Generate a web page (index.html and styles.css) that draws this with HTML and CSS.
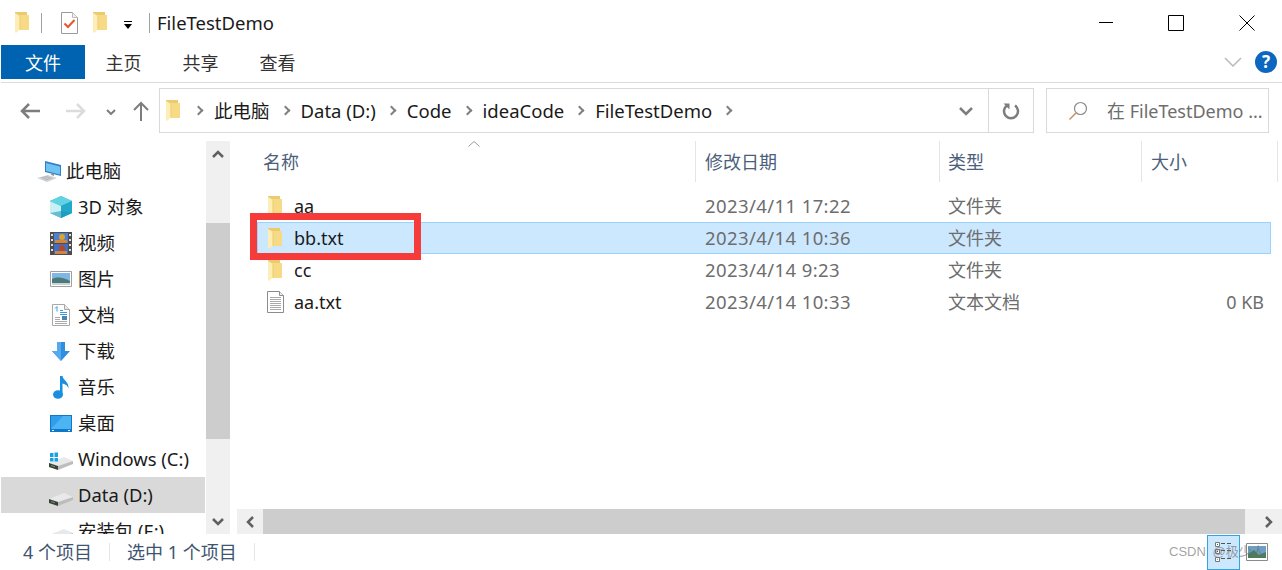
FILE: index.html
```html
<!DOCTYPE html>
<html lang="zh-CN">
<head>
    <meta charset="UTF-8">
    <title>FileTestDemo</title>
    <link rel="stylesheet" href="styles.css">
</head>
<body>
    <svg class="defs" width="0" height="0">
        <symbol id="folder" viewBox="0 0 14 21">
            <path d="M0 0h12v3h2v15H0z" fill="#eccb6e"/>
            <path d="M5 3h9v15H5z" fill="#f7da85"/>
            <path d="M0 1l5 3v13.500L1 21l-1-1z" fill="#fdeeb6"/>
            <path d="M5 4v13.500" stroke="#eccb6e"/>
        </symbol>
        <symbol id="drive" viewBox="0 0 24 22">
            <path d="M0 15L15 9l9 4v1L9 20z" fill="#e9e9e9"/>
            <path d="M9 18l15-5v3L9 22z" fill="#bdbdbd"/>
            <path d="M0 15l9 3v4l-9-3z" fill="#3e3e3e"/>
            <path d="M2 17l4 1.300v1L2 18z" fill="#4caf50"/>
        </symbol>
    </svg>

    <header class="titlebar">
        <svg width="14" height="21"><use href="#folder"/></svg>
        <span class="qa-sep"></span>
        <svg class="qa-check" width="17" height="22" viewBox="0 0 17 22">
            <path d="M.5.500h11l5 5v16H.5z" fill="#fff" stroke="#9a9a9a"/>
            <path d="M11.500.500v5h5" fill="#eee" stroke="#bbb"/>
            <path d="M3.500 11.500l3.500 3.500 6.500-7" fill="none" stroke="#e8552a" stroke-width="2"/>
        </svg>
        <svg class="qa-folder2" width="14" height="21"><use href="#folder"/></svg>
        <svg class="qa-more" width="10" height="9" viewBox="0 0 10 9">
            <path d="M1 .5h8" stroke="#000"/><path d="M1 3h8L5 8z" fill="#000"/>
        </svg>
        <span class="qa-sep qa-sep-last"></span>
        <span class="win-title">FileTestDemo</span>
        <div class="win-btns">
            <svg width="16" height="16" viewBox="0 0 16 16"><path d="M2 7.500h14" stroke="#000"/></svg>
            <svg width="16" height="16" viewBox="0 0 16 16"><path d="M.5.500h15v15H.5z" fill="none" stroke="#000"/></svg>
            <svg width="16" height="16" viewBox="0 0 16 16"><path d="M.5.500l15 15M15.500.500l-15 15" stroke="#000" fill="none"/></svg>
        </div>
    </header>

    <nav class="ribbon">
        <a class="tab tab-file">文件</a>
        <a class="tab">主页</a>
        <a class="tab">共享</a>
        <a class="tab">查看</a>
        <div class="ribbon-right">
            <svg width="18" height="10" viewBox="0 0 18 10"><path d="M1 1l8 8 8-8" fill="none" stroke="#b9b9b9" stroke-width="1.500"/></svg>
            <span class="help">?</span>
        </div>
    </nav>

    <section class="addressrow">
        <div class="navbtns">
            <svg width="20" height="16" viewBox="0 0 20 16"><path d="M9 1L2 8l7 7M2 8h18" fill="none" stroke="#7d7d7d" stroke-width="2.500"/></svg>
            <svg class="nav-forward" width="20" height="16" viewBox="0 0 20 16"><path d="M11 1l7 7-7 7M18 8H0" fill="none" stroke="#dcdcdc" stroke-width="2.500"/></svg>
            <svg class="nav-down" width="10" height="6" viewBox="0 0 10 6"><path d="M1 1l4 4 4-4" fill="none" stroke="#7d7d7d" stroke-width="2"/></svg>
            <svg class="nav-up" width="16" height="20" viewBox="0 0 16 20"><path d="M1 9l7-7 7 7M8 2v18" fill="none" stroke="#7d7d7d" stroke-width="2"/></svg>
        </div>
        <div class="addressbox">
            <svg class="addr-folder" width="14" height="21"><use href="#folder"/></svg>
            <span class="crumb-arrow"></span><span class="crumb">此电脑</span>
            <span class="crumb-arrow"></span><span class="crumb">Data (D:)</span>
            <span class="crumb-arrow"></span><span class="crumb">Code</span>
            <span class="crumb-arrow"></span><span class="crumb">ideaCode</span>
            <span class="crumb-arrow"></span><span class="crumb">FileTestDemo</span>
            <span class="crumb-arrow"></span>
            <div class="addr-end">
                <svg class="addr-drop" width="16" height="10" viewBox="0 0 16 10"><path d="M2 2l6 6 6-6" fill="none" stroke="#7d7d7d" stroke-width="2.500"/></svg>
                <div class="addr-refresh">
                    <svg width="18" height="18" viewBox="0 0 18 18"><path d="M5 3.500A7 7 0 1 0 13 3.500" fill="none" stroke="#7d7d7d" stroke-width="2.500"/><path d="M1.500 1.500h6v6z" fill="#7d7d7d"/></svg>
                </div>
            </div>
        </div>
        <div class="searchbox">
            <svg width="20" height="20" viewBox="0 0 20 20"><circle cx="12.500" cy="7.500" r="6" fill="none" stroke="#8a8a8a" stroke-width="1.200"/><path d="M8 12l-6.500 6.500" stroke="#d08a5a" stroke-width="1.500"/></svg>
            <span class="search-text">在 FileTestDemo ...</span>
        </div>
    </section>

    <main class="body">
        <aside class="sidebar">
            <ul class="navtree">
                <li class="node node-root">
                    <svg width="24" height="21" viewBox="0 0 24 21"><path d="M8 0l16 4v11L8 11z" fill="#2f7fc8"/><path d="M9 2l14 3.500v8L9 10z" fill="#6fc3f3"/><path d="M14 12l3 1v2l-3-1z" fill="#9a9a9a"/><path d="M0 17l11-3 9 3-10 4z" fill="#cfd3d6"/><path d="M4 17l7-2M6 18l7-2M8 19l7-2" stroke="#a9adb0" stroke-width=".7"/></svg>
                    此电脑
                </li>
                <li class="node">
                    <svg width="22" height="22" viewBox="0 0 22 22"><path d="M11 0l11 5v12l-11 5-11-5V5z" fill="#3cb6d2"/><path d="M0 5l11 5v12L0 17z" fill="#c9f0f4"/><path d="M11 0l11 5-11 5L0 5z" fill="#62d3e2"/><path d="M11 10l11-5v12l-11 5z" fill="#22a8c8"/><path d="M11 15l11 2-11 5-11-5z" fill="#1a94b8" opacity=".55"/></svg>
                    3D 对象
                </li>
                <li class="node">
                    <svg width="22" height="23" viewBox="0 0 22 23"><path d="M0 0h22v23H0z" fill="#4d4d4d"/><path d="M4 1h14v10H4z" fill="#4f7fd0"/><path d="M4 12h14v10H4z" fill="#3f6fc4"/><path d="M5 8h12v3H5zM5 19h12v3H5z" fill="#d4843c"/><circle cx="12" cy="5" r="3" fill="#d9a52c"/><circle cx="12" cy="16" r="3" fill="#b5482c"/><path d="M1 2h2v2H1zM1 7h2v2H1zM1 12h2v2H1zM1 17h2v2H1zM19 2h2v2h-2zM19 7h2v2h-2zM19 12h2v2h-2zM19 17h2v2h-2z" fill="#ddd"/></svg>
                    视频
                </li>
                <li class="node">
                    <svg width="22" height="16" viewBox="0 0 22 16"><path d="M.5.500h21v15H.5z" fill="#fff" stroke="#a0a0a0"/><path d="M2 2h18v8H2z" fill="#7fb7e6"/><path d="M2 8c6-3 12-1 18 2v4H2z" fill="#4d7a78"/><path d="M2 12h18v2H2z" fill="#c8d6d8"/></svg>
                    图片
                </li>
                <li class="node">
                    <svg width="18" height="22" viewBox="0 0 18 22"><path d="M.5.500h12l5 5v16H.5z" fill="#fff" stroke="#a8a8a8"/><path d="M12.500.500v5h5" fill="#e8e8e8" stroke="#a8a8a8"/><path d="M3 13.500h5M3 15.500h5M3 17.500h12M3 19.500h12" stroke="#a9a9a9"/><path d="M3 4.500l2-2v5M8 6.500h3M8 8.500h7M8 10.500h7" stroke="#33a0e0" fill="none"/><path d="M10 12h5v4h-5z" fill="#4f86a8"/></svg>
                    文档
                </li>
                <li class="node">
                    <svg width="18" height="19" viewBox="0 0 18 19"><path d="M5 0h8v9h5l-9 10L0 9h5z" fill="#2e8fe0"/><path d="M5 0h4v19L0 9h5z" fill="#55a9ee"/></svg>
                    下载
                </li>
                <li class="node">
                    <svg width="16" height="23" viewBox="0 0 16 23"><ellipse cx="5" cy="18.500" rx="5" ry="4.300" fill="#1a8fe0"/><path d="M7 0h2.500c.5 4 6.500 6 6 12.500C15 10 12.500 8 9.500 7.500V19H7z" fill="#1a8fe0"/></svg>
                    音乐
                </li>
                <li class="node">
                    <svg width="22" height="17" viewBox="0 0 22 17"><path d="M0 0h22v17H0z" fill="#0f78c8"/><path d="M1 1h20v13H1z" fill="#2f9fec"/><path d="M1 14L13 1h8v13z" fill="#4cb4f2"/><path d="M2 15h2v1H2zM18 15h2v1h-2z" fill="#fff"/></svg>
                    桌面
                </li>
                <li class="node">
                    <svg width="24" height="22" viewBox="0 0 24 22"><use href="#drive" width="24" height="22"/><path d="M1 5h3.500v4H1zM5.500 4.500H9v4.500H5.500zM1 10h3.500v3.500H1zM5.500 10H9v3.500H5.500z" fill="#1ba1e2"/></svg>
                    Windows (C:)
                </li>
                <li class="node node-sel">
                    <svg width="24" height="22"><use href="#drive"/></svg>
                    Data (D:)
                </li>
                <li class="node">
                    <svg width="24" height="22"><use href="#drive"/></svg>
                    安装包 (E:)
                </li>
            </ul>
        </aside>
        <div class="vscroll">
            <button class="sbtn"><svg width="12" height="8" viewBox="0 0 12 8"><path d="M1 7l5-5 5 5" fill="none" stroke="#606060" stroke-width="2.500"/></svg></button>
            <div class="vtrack"><div class="vthumb"></div></div>
            <button class="sbtn"><svg width="12" height="8" viewBox="0 0 12 8"><path d="M1 1l5 5 5-5" fill="none" stroke="#606060" stroke-width="2.500"/></svg></button>
        </div>

        <div class="content">
            <div class="colhead">
                <div class="col col-name">名称<svg class="sort" width="12" height="6" viewBox="0 0 12 6"><path d="M.5 5.500L6 .5l5.500 5" fill="none" stroke="#9a9a9a"/></svg></div>
                <div class="col col-date">修改日期</div>
                <div class="col col-type">类型</div>
                <div class="col col-size">大小</div>
            </div>
            <div class="rows">
                <div class="row">
                    <div class="cell-name"><svg width="14" height="21"><use href="#folder"/></svg>aa</div>
                    <div class="cell-date">2023/4/11 17:22</div><div class="cell-type">文件夹</div><div class="cell-size"></div>
                </div>
                <div class="row row-sel">
                    <div class="cell-name"><svg width="14" height="21"><use href="#folder"/></svg>bb.txt</div>
                    <div class="cell-date">2023/4/14 10:36</div><div class="cell-type">文件夹</div><div class="cell-size"></div>
                </div>
                <div class="row">
                    <div class="cell-name"><svg width="14" height="21"><use href="#folder"/></svg>cc</div>
                    <div class="cell-date">2023/4/14 9:23</div><div class="cell-type">文件夹</div><div class="cell-size"></div>
                </div>
                <div class="row">
                    <div class="cell-name"><svg class="ic-txt" width="17" height="22" viewBox="0 0 17 22"><path d="M.5.500h12l4 4v17H.5z" fill="#fff" stroke="#8c8c8c"/><path d="M12.500.500v4h4" fill="#eee" stroke="#8c8c8c"/><path d="M3 6.500h11M3 8.500h11M3 10.500h11M3 12.500h11M3 14.500h11M3 16.500h11M3 18.500h11" stroke="#a8a8a8"/></svg>aa.txt</div>
                    <div class="cell-date">2023/4/14 10:33</div><div class="cell-type">文本文档</div><div class="cell-size">0 KB</div>
                </div>
            </div>
            <div class="hscroll">
                <button class="sbtn-h"><svg width="8" height="12" viewBox="0 0 8 12"><path d="M7 1L2 6l5 5" fill="none" stroke="#606060" stroke-width="2.500"/></svg></button>
                <div class="hthumb"></div>
                <button class="sbtn-h"><svg width="8" height="12" viewBox="0 0 8 12"><path d="M1 1l5 5-5 5" fill="none" stroke="#606060" stroke-width="2.500"/></svg></button>
            </div>
            <div class="redbox"></div>
        </div>
    </main>

    <footer class="statusbar">
        <span class="st-item">4 个项目</span>
        <span class="st-sep"></span>
        <span class="st-item">选中 1 个项目</span>
        <span class="st-sep"></span>
        <div class="view-btns">
            <span class="view-btn view-on">
                <svg width="18" height="20" viewBox="0 0 18 20"><path d="M.5.500h4v4h-4zM.5 7.500h4v4h-4zM.5 15.500h4v4h-4z" fill="#fff" stroke="#777"/><path d="M6 1.500h4M12 1.500h4M6 8.500h4M12 8.500h4M6 16.500h4M12 16.500h4" stroke="#555"/><path d="M2 2h1v1H2z" fill="#26a"/><path d="M2 9h1v1H2z" fill="#c33"/><path d="M2 17h1v1H2z" fill="#9a3"/></svg>
            </span>
            <span class="view-btn">
                <svg width="22" height="18" viewBox="0 0 22 18"><path d="M.5.500h21v17H.5z" fill="#fff" stroke="#8a8a8a"/><path d="M2 3h18v12H2z" fill="#6b9fc4"/><path d="M2 11l6-4 5 5 7-3v6H2z" fill="#4e7a5e"/></svg>
            </span>
        </div>
        <span class="watermark">CSDN @极少人</span>
    </footer>
</body>
</html>
```

FILE: styles.css
```css
* {
    margin: 0;
    padding: 0;
    box-sizing: border-box;
}

html, body {
    width: 1282px;
    height: 570px;
    overflow: hidden;
}

body {
    background: #fff;
    color: #1a1a1a;
    font-family: "Noto Sans", "Noto Sans CJK SC", sans-serif;
    font-size: 18px;
    line-height: 24px;
}

svg {
    display: block;
    flex: none;
}

.defs {
    position: absolute;
}

/* Title bar */
.titlebar {
    height: 45px;
    display: flex;
    align-items: center;
    padding-left: 15px;
}

.qa-sep {
    width: 1px;
    height: 20px;
    background: #a0a0a0;
    margin-left: 12px;
}

.qa-check {
    margin-left: 19px;
}

.qa-folder2 {
    margin-left: 15px;
}

.qa-more {
    margin-left: 16px;
    margin-top: 6px;
}

.qa-sep-last {
    margin-left: 16px;
}

.win-title {
    margin-left: 7px;
    font-size: 18.5px;
}

.win-btns {
    margin-left: auto;
    padding-right: 27px;
    display: flex;
    gap: 55px;
}

/* Ribbon */
.ribbon {
    height: 38px;
    margin-left: 1px;
    padding-bottom: 3px;
    display: flex;
    align-items: stretch;
    border-bottom: 1px solid #dadada;
}

.tab {
    width: 77px;
    padding-top: 1px;
    display: flex;
    align-items: center;
    justify-content: center;
    color: #333;
}

.tab-file {
    width: 84px;
    background: #0063b1;
    color: #fff;
}

.ribbon-right {
    margin-left: auto;
    padding-right: 5px;
    display: flex;
    align-items: center;
    gap: 13px;
}

.help {
    width: 22px;
    height: 22px;
    border-radius: 50%;
    background: #0d66c0;
    color: #fff;
    font-size: 17px;
    font-weight: 700;
    display: flex;
    align-items: center;
    justify-content: center;
}

/* Address row */
.addressrow {
    height: 58px;
    padding-top: 5px;
    display: flex;
    align-items: flex-start;
}

.navbtns {
    width: 159px;
    height: 45px;
    padding-left: 20px;
    display: flex;
    align-items: center;
}

.nav-forward {
    margin-left: 26px;
}

.nav-down {
    margin-left: 20px;
    margin-top: 2px;
}

.nav-up {
    margin-left: 17px;
}

.addressbox {
    width: 875px;
    height: 45px;
    border: 1px solid #d9d9d9;
    display: flex;
    align-items: center;
    padding-left: 6px;
}

.addr-folder {
    margin-right: 15px;
}

.crumb-arrow {
    width: 7px;
    height: 7px;
    border-top: 2px solid #808080;
    border-right: 2px solid #808080;
    transform: rotate(45deg);
    margin-right: 12px;
}

.crumb {
    margin-right: 12px;
    font-size: 18.5px;
}

.addr-end {
    margin-left: auto;
    height: 100%;
    display: flex;
    align-items: center;
}

.addr-drop {
    margin-right: 14px;
}

.addr-refresh {
    width: 45px;
    height: 100%;
    border-left: 1px solid #d9d9d9;
    display: flex;
    align-items: center;
    justify-content: center;
}

.searchbox {
    width: 223px;
    height: 45px;
    margin-left: 12px;
    border: 1px solid #d9d9d9;
    display: flex;
    align-items: center;
    padding-left: 21px;
    color: #6d6d6d;
}

.search-text {
    margin-left: 19px;
    white-space: nowrap;
}

/* Main area */
.body {
    height: 393px;
    margin-left: 1px;
    display: flex;
    overflow: hidden;
}

.sidebar {
    width: 204px;
    overflow: hidden;
    font-size: 18.4px;
}

.navtree {
    list-style: none;
    padding-top: 12px;
}

.node {
    height: 36px;
    padding-left: 48px;
    display: flex;
    align-items: center;
    white-space: nowrap;
}

.node svg {
    width: 24px;
    margin-right: 5px;
}

.node-root {
    padding-left: 36px;
}

.node-sel {
    background: #d9d9d9;
}

.vscroll {
    width: 24px;
    margin-left: 1px;
    background: #f0f0f0;
    display: flex;
    flex-direction: column;
}

.sbtn {
    height: 25px;
    border: none;
    background: #f0f0f0;
    display: flex;
    align-items: center;
    justify-content: center;
}

.vtrack {
    flex: 1;
    padding-top: 57px;
}

.vthumb {
    height: 216px;
    background: #cdcdcd;
}

.content {
    flex: 1;
    position: relative;
    margin-left: 6px;
    display: flex;
    flex-direction: column;
    min-width: 0;
}

.colhead {
    height: 41px;
    display: flex;
    color: #4c607a;
}

.col {
    position: relative;
    height: 41px;
    padding-left: 9px;
    border-right: 1px solid #e5e5e5;
    display: flex;
    align-items: center;
}

.col-name {
    width: 460px;
    padding-left: 27px;
}

.col-date {
    width: 244px;
}

.col-type {
    width: 202px;
    padding-left: 8px;
}

.col-size {
    width: 136px;
}

.sort {
    position: absolute;
    top: 0;
    left: 232px;
}

.rows {
    flex: 1;
    padding-top: 8px;
}

.row {
    width: 1014px;
    height: 32px;
    margin-left: 21px;
    display: flex;
    align-items: center;
    border: 1px solid transparent;
}

.row-sel {
    background: #cce8ff;
    border-color: #99d1ff;
}

.cell-name {
    width: 447px;
    padding-left: 10px;
    display: flex;
    align-items: center;
    gap: 12px;
}

.ic-txt {
    margin-left: -1px;
    margin-right: -2px;
}

.cell-date {
    width: 243px;
    color: #6d6d6d;
    font-size: 18.5px;
    letter-spacing: .4px;
}

.cell-type {
    width: 240px;
    color: #6d6d6d;
}

.cell-size {
    flex: 1;
    text-align: right;
    padding-right: 6px;
    color: #6d6d6d;
    white-space: nowrap;
}

.hscroll {
    height: 25px;
    margin-left: 1px;
    display: flex;
    background: #f0f0f0;
}

.sbtn-h {
    width: 26px;
    border: none;
    background: #f0f0f0;
    display: flex;
    align-items: center;
    justify-content: center;
}

.hthumb {
    flex: 1;
    margin-right: 11px;
    background: #cdcdcd;
}

.redbox {
    position: absolute;
    left: 14px;
    top: 72px;
    width: 171px;
    height: 47px;
    border: 7px solid #f63b3b;
}

/* Status bar */
.statusbar {
    position: relative;
    height: 36px;
    padding-left: 23px;
    display: flex;
    align-items: center;
    color: #3e5470;
}

.st-sep {
    width: 1px;
    height: 18px;
    margin: 0 17px;
    background: #e5e5e5;
}

.view-btns {
    margin-left: auto;
    margin-right: 9px;
    display: flex;
    align-items: center;
}

.view-btn {
    width: 33px;
    height: 35px;
    display: flex;
    align-items: center;
    justify-content: center;
}

.view-on {
    background: #cce8ff;
    border: 1px solid #35a4dd;
}

.watermark {
    position: absolute;
    left: 1169px;
    top: 6px;
    color: rgba(110, 110, 110, .65);
    font-family: "Liberation Sans", "Noto Sans CJK SC", sans-serif;
    font-size: 13px;
    word-spacing: 3px;
    white-space: nowrap;
}
```
